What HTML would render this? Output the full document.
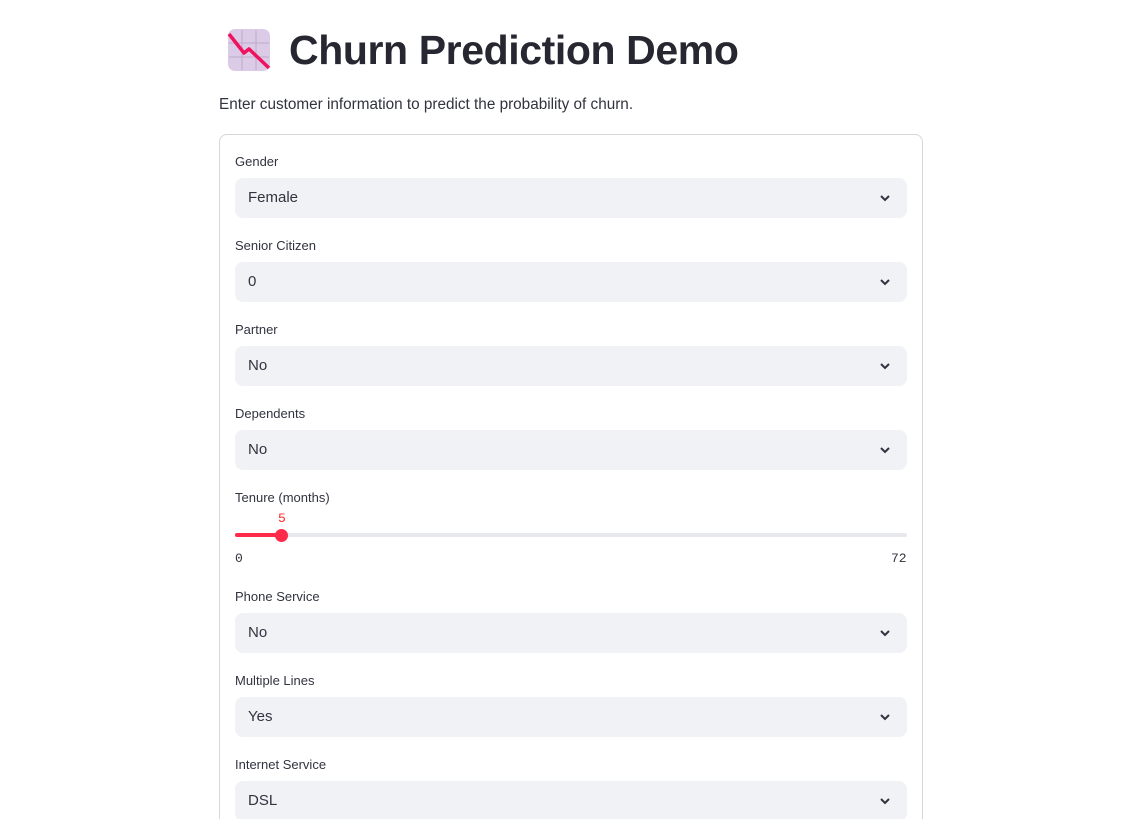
<!DOCTYPE html>
<html><head><meta charset="utf-8"><style>
*{box-sizing:border-box;margin:0;padding:0}
html,body{width:1125px;height:819px;overflow:hidden}
body{background:#fff;font-family:"Liberation Sans",sans-serif;color:#31333f;position:relative}
.abs{position:absolute}
h1{position:absolute;left:289px;top:24px;font-size:41px;font-weight:700;color:#262730;letter-spacing:-0.4px;line-height:52px}
.sub{left:219px;top:95px;font-size:15.3px;line-height:20px}
.card{left:219px;top:134px;width:704px;height:720px;border:1px solid #d6d6d9;border-radius:8px}
.lbl{left:235px;font-size:13px;line-height:16px;color:#31333f;top:0}
.sel{left:235px;width:672px;height:40px;background:#f0f2f6;border-radius:8px;font-size:15px;line-height:40px;padding-left:13px}
.sel svg{position:absolute;right:15px;top:13px}
.mono{font-family:"Liberation Mono",monospace;font-size:13px}
</style></head><body>
<svg class="abs" style="left:227px;top:28px" width="44" height="44" viewBox="0 0 44 44">
<rect x="1" y="1" width="42" height="42" rx="7" fill="#dccbe6"/>
<g stroke="#c2afd0" stroke-width="1.2"><line x1="15" y1="2" x2="15" y2="42"/><line x1="29" y1="2" x2="29" y2="42"/><line x1="2" y1="15" x2="42" y2="15"/><line x1="2" y1="29" x2="42" y2="29"/></g>
<polyline points="2,6 17,25 22,21 42,40" fill="none" stroke="#f0125e" stroke-width="3.5" stroke-linejoin="round"/>
</svg>
<h1>Churn Prediction Demo</h1>
<div class="abs sub">Enter customer information to predict the probability of churn.</div>
<div class="abs card"></div>

<div class="abs lbl" style="top:154px">Gender</div>
<div class="abs sel" style="top:178px">Female<svg width="14" height="14" viewBox="0 0 14 14"><path d="M3 5l4 4 4-4" stroke="#31333f" stroke-width="2" fill="none"/></svg></div>
<div class="abs lbl" style="top:238px">Senior Citizen</div>
<div class="abs sel" style="top:262px">0<svg width="14" height="14" viewBox="0 0 14 14"><path d="M3 5l4 4 4-4" stroke="#31333f" stroke-width="2" fill="none"/></svg></div>
<div class="abs lbl" style="top:322px">Partner</div>
<div class="abs sel" style="top:346px">No<svg width="14" height="14" viewBox="0 0 14 14"><path d="M3 5l4 4 4-4" stroke="#31333f" stroke-width="2" fill="none"/></svg></div>
<div class="abs lbl" style="top:406px">Dependents</div>
<div class="abs sel" style="top:430px">No<svg width="14" height="14" viewBox="0 0 14 14"><path d="M3 5l4 4 4-4" stroke="#31333f" stroke-width="2" fill="none"/></svg></div>

<div class="abs lbl" style="top:490px">Tenure (months)</div>
<div class="abs mono" style="left:278px;top:511px;color:#ff2b2b">5</div>
<div class="abs" style="left:235px;top:533px;width:672px;height:4px;background:#e6e8ee;border-radius:2px"></div>
<div class="abs" style="left:235px;top:533px;width:47px;height:4px;background:#ff2b4b;border-radius:2px"></div>
<div class="abs" style="left:275px;top:529px;width:13px;height:13px;background:#ff2b4b;border-radius:50%"></div>
<div class="abs mono" style="left:235px;top:551px">0</div>
<div class="abs mono" style="left:891px;top:551px">72</div>

<div class="abs lbl" style="top:589px">Phone Service</div>
<div class="abs sel" style="top:613px">No<svg width="14" height="14" viewBox="0 0 14 14"><path d="M3 5l4 4 4-4" stroke="#31333f" stroke-width="2" fill="none"/></svg></div>
<div class="abs lbl" style="top:673px">Multiple Lines</div>
<div class="abs sel" style="top:697px">Yes<svg width="14" height="14" viewBox="0 0 14 14"><path d="M3 5l4 4 4-4" stroke="#31333f" stroke-width="2" fill="none"/></svg></div>
<div class="abs lbl" style="top:757px">Internet Service</div>
<div class="abs sel" style="top:781px">DSL<svg width="14" height="14" viewBox="0 0 14 14"><path d="M3 5l4 4 4-4" stroke="#31333f" stroke-width="2" fill="none"/></svg></div>
</body></html>
